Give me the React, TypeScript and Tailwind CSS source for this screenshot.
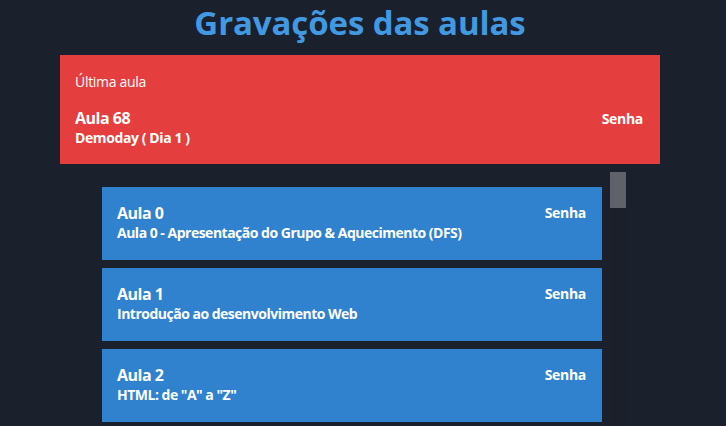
import React from 'react';

type Lesson = { title: string; subtitle: string };

const LESSONS: Lesson[] = [
  { title: 'Aula 0', subtitle: 'Aula 0 - Apresentação do Grupo & Aquecimento (DFS)' },
  { title: 'Aula 1', subtitle: 'Introdução ao desenvolvimento Web' },
  { title: 'Aula 2', subtitle: 'HTML: de "A" a "Z"' },
];

function LessonCard({ lesson }: { lesson: Lesson }) {
  return (
    <div className="w-[500px] h-[73px] shrink-0 bg-[#3182ce] text-white flex justify-between items-start px-[15px] pt-[16px]">
      <div className="flex flex-col">
        <span className="text-[16px] font-bold leading-[20px] tracking-[-0.5px]">{lesson.title}</span>
        <span className="text-[14px] font-bold leading-[19px] tracking-[-0.5px]">{lesson.subtitle}</span>
      </div>
      <span className="text-[14px] font-bold leading-[20px] tracking-[-0.3px] pr-[1px]">Senha</span>
    </div>
  );
}

export default function App() {
  return (
    <main
      className="w-screen h-screen bg-[#1a202c] overflow-hidden"
      style={{ fontFamily: '"Open Sans", "Noto Sans", sans-serif' }}
    >
      <div className="w-[600px] ml-[60px] flex flex-col">
        {/* Heading */}
        <h1 className="text-center text-[33px] font-bold leading-[46px] mb-[9px] tracking-[-0.1px] text-[#4299e1]">
          Gravações das aulas
        </h1>

        {/* Latest lesson */}
        <div className="h-[109px] bg-[#e53e3e] text-white px-[15px] pt-[17px]">
          <p className="text-[14px] leading-[20px] tracking-[-0.3px]">Última aula</p>
          <div className="flex justify-between items-start mt-[16px]">
            <div className="flex flex-col">
              <span className="text-[16px] font-bold leading-[21px] tracking-[-0.5px]">Aula 68</span>
              <span className="text-[14px] font-bold leading-[18px] tracking-[-0.4px]">Demoday ( Dia 1 )</span>
            </div>
            <span className="text-[14px] font-bold leading-[21px] tracking-[-0.3px] pr-[2px]">Senha</span>
          </div>
        </div>

        {/* All lessons, with the list's scrollbar */}
        <div className="ml-[42px] mt-[8px] flex gap-[8px] h-[262px]">
          <div className="flex flex-col gap-[8px] pt-[15px] overflow-hidden">
            {LESSONS.map((lesson) => (
              <LessonCard key={lesson.title} lesson={lesson} />
            ))}
          </div>
          <div className="w-[16px] bg-[#1b1f2a]">
            <div className="h-[36px] bg-[#5f6269]" />
          </div>
        </div>
      </div>
    </main>
  );
}
